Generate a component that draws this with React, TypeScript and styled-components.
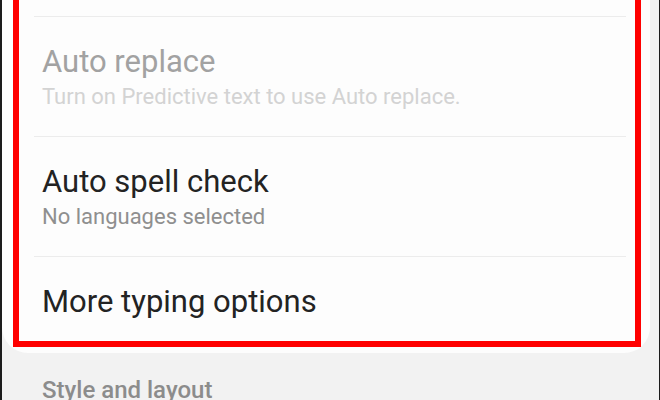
import React from "react";
import styled, {createGlobalStyle} from "styled-components";

const GlobalStyle = createGlobalStyle`
  html, body {
    margin: 0;
    padding: 0;
    background: #f2f2f2;
  }
  body {
    font-family: Roboto, "Noto Sans", "Liberation Sans", sans-serif;
  }
`;

const Screen = styled.div`
  width: 660px;
  height: 400px;
  box-sizing: border-box;
  overflow: hidden;
  background: #f2f2f2;
  border-left: 2px solid #1c1c1c;
  border-right: 1px solid #1c1c1c;
`;

// top of the card scrolls off the screen
const Card = styled.div`
  margin: -109px 9px 0 0;
  padding: 0 9px 6px 11px;
  background: #fdfdfd;
  border-radius: 0 0 26px 26px;
`;

// red annotation box drawn around the settings group
const Highlight = styled.div`
  border: 6px solid #ff0000;
`;

const Row = styled.div<{ $first?: boolean; $last?: boolean }>`
  margin: 0 9px 0 15px;
  padding: 26px 0 ${p => (p.$last ? "21px" : "26px")} 8px;
  border-top: ${p => (p.$first ? "none" : "1px solid #ececec")};
`;

const Title = styled.div<{ $disabled?: boolean }>`
  font-size: 31px;
  line-height: 37px;
  color: ${p => (p.$disabled ? "#a2a2a2" : "#232323")};
`;

const Subtitle = styled.div<{ $disabled?: boolean }>`
  margin-top: 4px;
  font-size: 22px;
  line-height: 26px;
  color: ${p => (p.$disabled ? "#d3d3d3" : "#8f8f8f")};
`;

const SectionHeader = styled.div`
  margin-top: 23px;
  padding-left: 40px;
  font-size: 24px;
  line-height: 28px;
  font-weight: 500;
  color: #8c8c8c;
`;

interface ISetting {
  title: string;
  subtitle?: string;
  disabled?: boolean;
}

const settings: ISetting[] = [
  {title: "Predictive text", subtitle: "Off"},
  {title: "Auto replace", subtitle: "Turn on Predictive text to use Auto replace.", disabled: true},
  {title: "Auto spell check", subtitle: "No languages selected"},
  {title: "More typing options"},
];

export default function App() {
  return (
    <>
      <GlobalStyle/>
      <Screen>
        <Card>
          <Highlight>
            {settings.map((s, i) => (
              <Row key={s.title} $first={i === 0} $last={i === settings.length - 1}>
                <Title $disabled={s.disabled}>{s.title}</Title>
                {s.subtitle && <Subtitle $disabled={s.disabled}>{s.subtitle}</Subtitle>}
              </Row>
            ))}
          </Highlight>
        </Card>
        <SectionHeader>Style and layout</SectionHeader>
      </Screen>
    </>
  );
}
